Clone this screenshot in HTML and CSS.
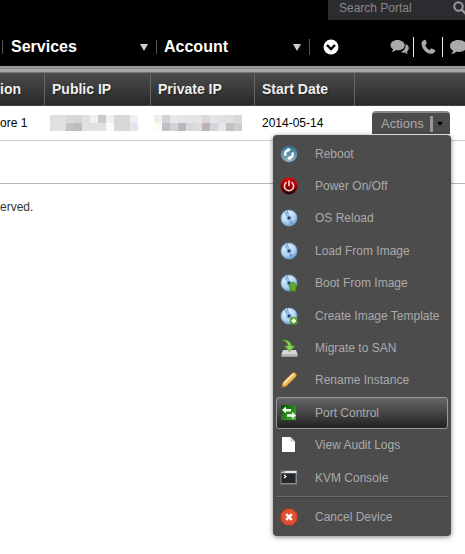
FILE: index.html
```html
<!DOCTYPE html>
<html lang="en">
<head>
<meta charset="utf-8">
<title>Portal - Device List</title>
<link rel="stylesheet" href="styles.css">
</head>
<body>
<svg class="defs" aria-hidden="true">
  <defs>
    <radialGradient id="disc-fill" cx=".4" cy=".3" r=".75"><stop offset="0" stop-color="#edf6ff"/><stop offset=".6" stop-color="#b5d5f5"/><stop offset="1" stop-color="#6799cb"/></radialGradient>
    <linearGradient id="red-fill" x2="0" y2="1"><stop offset="0" stop-color="#e00808"/><stop offset=".5" stop-color="#a00000"/><stop offset="1" stop-color="#180000"/></linearGradient>
    <linearGradient id="blue-fill" x2="0" y2="1"><stop offset="0" stop-color="#2b6f8e"/><stop offset="1" stop-color="#8fb0c2"/></linearGradient>
    <linearGradient id="green-fill" x2="1" y2="1"><stop offset="0" stop-color="#0b4d0b"/><stop offset="1" stop-color="#49b52e"/></linearGradient>
    <linearGradient id="pencil-fill" x2="1" y2="1"><stop offset="0" stop-color="#fff0b0"/><stop offset="1" stop-color="#e08a1c"/></linearGradient>
    <symbol id="disc" viewBox="0 0 18 18">
      <circle cx="9" cy="9" r="8" fill="url(#disc-fill)" stroke="#7da6d2" stroke-width=".8"/>
      <path d="M7 2l1.500 4M5 3l2 4M11 16l-1-4M13 15l-2-3" stroke="#6e9fda" stroke-width="1.400"/>
      <circle cx="9" cy="9" r="2.800" fill="#8db6e2"/>
      <circle cx="9" cy="9" r="1.400" fill="#263c58"/>
    </symbol>
  </defs>
</svg>
<header class="top">
  <form class="search" role="search">
    <input class="search-input" type="text" placeholder="Search Portal" aria-label="Search Portal">
    <button class="search-button" type="button" aria-label="Search"><svg width="14" height="14" viewBox="0 0 14 14"><circle cx="5.500" cy="5.500" r="4.200" fill="none" stroke="#999" stroke-width="2"/><path d="M8.500 8.500l4.500 4.500" stroke="#999" stroke-width="2.600"/></svg></button>
  </form>
  <nav class="nav">
    <a class="nav-item services" href="#">Services<span class="arrow"></span></a>
    <a class="nav-item account" href="#">Account<span class="arrow"></span></a>
    <button class="more" type="button" aria-label="More"><svg width="16" height="16" viewBox="0 0 16 16"><circle cx="8" cy="8" r="7.500" fill="#fff"/><path d="M4 6l4 4 4-4" fill="none" stroke="#000" stroke-width="2.400"/></svg></button>
    <div class="contact">
      <a class="contact-link" href="#" aria-label="Chat"><svg width="19" height="16" viewBox="0 0 19 16"><path d="M11 13c2 1 3 .7 4 .5 1 .9 2 1.300 3 1.500-.8-1-1-1.500-1-2.200C20 10 19 6 15.500 5c.6 4-1.500 7-4.500 8z" fill="#aaa"/><path d="M7.500 1C3.500 1 .5 3.300.5 6.200c0 1.700 1 3.200 2.500 4.100 0 1-.6 2-1.500 2.700 2-.2 3.300-1 4.200-1.800 5 .7 9-1.400 9-5C14.700 3.300 11.500 1 7.500 1z" fill="#aaa"/></svg></a>
      <a class="contact-link" href="#" aria-label="Phone"><svg width="17" height="16" viewBox="0 0 16 16"><path d="M4.300.8C2 1.500.8 3 1 5c.5 5 4.500 9 8.500 9.800 2.200.3 4.500-.8 5.300-2.800.2-.5 0-.8-.4-1l-3-1.400c-.5-.2-.9 0-1.200.3l-1 1.200C7 10.200 5.300 8 4.700 6l1.200-1c.4-.3.500-.7.3-1.200L5.200 1.200c-.2-.4-.5-.5-.9-.4z" fill="#aaa"/></svg></a>
      <a class="contact-link" href="#" aria-label="Message"><svg width="19" height="16" viewBox="0 0 19 16"><path d="M9.500 1C4.500 1 1 3.500 1 7c0 2 1.200 3.600 3 4.600 0 1.500-.8 2.700-2 3.400 2.500 0 4.300-1 5.500-2.200C13.500 13.500 18 11 18 7c0-3.500-3.500-6-8.500-6z" fill="#aaa"/></svg></a>
    </div>
  </nav>
</header>
<main>
  <table class="devices">
    <colgroup><col class="col-location"><col class="col-public"><col class="col-private"><col class="col-date"><col></colgroup>
    <thead>
      <tr><th class="cut">ion</th><th>Public IP</th><th>Private IP</th><th>Start Date</th><th></th></tr>
    </thead>
    <tbody>
      <tr>
        <td class="cut">ore 1</td>
        <td class="address"><svg width="88" height="16" viewBox="0 0 11 2" shape-rendering="crispEdges"><path fill="#e0e0e0" d="M0 0h11v2H0z"/><path fill="#e3dfdb" d="M1 0h1v1H1z"/><path fill="#d8d8de" d="M2 0h1v1H2z"/><path fill="#d8d3d5" d="M3 0h1v1H3z"/><path fill="#f0f0ec" d="M5 0h1v1H5z"/><path fill="#cacaca" d="M6 0h1v1H6z"/><path fill="#f0f0f5" d="M7 0h1v1H7z"/><path fill="#d8d8d8" d="M8 0h1v2H8z"/><path fill="#dad8d3" d="M9 0h1v2H9z"/><path fill="#eeeef5" d="M10 0h1v1h-1z"/><path fill="#c4c1c4" d="M2 1h1v1H2z"/><path fill="#c1bcbf" d="M3 1h1v1H3z"/><path fill="#dde0e6" d="M4 1h1v1H4z"/><path fill="#fafaf8" d="M7 1h1v1H7z"/><path fill="#e2e4ef" d="M10 1h1v1h-1z"/></svg></td>
        <td class="address private"><svg width="88" height="16" viewBox="0 0 11 2" shape-rendering="crispEdges"><path fill="#e2e4e6" d="M0 0h11v2H0z"/><path fill="#f2eee9" d="M0 0h1v1H0z"/><path fill="#d2d2d5" d="M1 0h1v1H1z"/><path fill="#e8e7eb" d="M2 0h1v1H2z"/><path fill="#ddd7d7" d="M6 0h1v1H6z"/><path fill="#e0e0dd" d="M8 0h2v1H8z"/><path fill="#d8dadc" d="M10 0h1v1h-1z"/><path fill="#fefcf2" d="M0 1h1v1H0z"/><path fill="#c1bec5" d="M1 1h1v1H1z"/><path fill="#d4d2d7" d="M2 1h1v1H2z"/><path fill="#b5b9bb" d="M3 1h1v1H3z"/><path fill="#d6d7da" d="M4 1h1v1H4z"/><path fill="#dfdbd8" d="M5 1h1v1H5z"/><path fill="#bbb3b7" d="M6 1h1v1H6z"/><path fill="#d0d5dc" d="M7 1h1v1H7z"/><path fill="#e5e5e8" d="M8 1h1v1H8z"/><path fill="#c4c1c1" d="M9 1h1v1H9z"/><path fill="#cccecf" d="M10 1h1v1h-1z"/></svg></td>
        <td class="date">2014-05-14</td>
        <td class="action-cell">
          <div class="actions">
            <button class="actions-button" type="button" aria-haspopup="true" aria-expanded="true">Actions<span class="split"></span><span class="caret"></span></button>
            <div class="menu">
              <div class="menu-group">
                <button class="item" type="button"><svg class="icon" viewBox="0 0 18 18"><circle cx="9" cy="9" r="8.300" fill="url(#blue-fill)"/><path d="M8.500 5C5.500 5.500 4.500 8 5.600 10.600M9.500 13c3-.5 4-3 2.900-5.600" fill="none" stroke="#fff" stroke-width="2.400"/><path d="M7.500 2.500v5L11 4.500zM10.500 15.500v-5L7 13.500z" fill="#fff"/></svg>Reboot</button>
                <button class="item" type="button"><svg class="icon" viewBox="0 0 18 18"><circle cx="9" cy="9" r="8.500" fill="url(#red-fill)"/><path d="M6 5.600a4.600 4.600 0 1 0 6 0M9 4v4.500" fill="none" stroke="#f3cfcf" stroke-width="1.700" stroke-linecap="round"/></svg>Power On/Off</button>
                <button class="item" type="button"><svg class="icon" viewBox="0 0 18 18"><use href="#disc"/></svg>OS Reload</button>
              </div>
              <div class="menu-group">
                <button class="item" type="button"><svg class="icon" viewBox="0 0 18 18"><use href="#disc"/></svg>Load From Image</button>
                <button class="item" type="button"><svg class="icon" viewBox="0 0 18 18"><use href="#disc"/><path d="M13 7.500l4.500 4.500H16v5h-6v-5H8.500z" fill="#5fa832" stroke="#41831d" stroke-width=".8"/></svg>Boot From Image</button>
              </div>
              <div class="menu-group">
                <button class="item" type="button"><svg class="icon" viewBox="0 0 18 18"><use href="#disc"/><rect x="10" y="10" width="7.500" height="7.500" rx="2" fill="#5b9c36"/><path d="M13.750 11.500v4.500M11.500 13.750H16" stroke="#f4ffe8" stroke-width="2"/></svg>Create Image Template</button>
                <button class="item" type="button"><svg class="icon" viewBox="0 0 18 18"><path d="M3 11h13l1.500 4v2.500h-16V15z" fill="#d5d8d7"/><path d="M2 15h15v2.300H2z" fill="#b5b8b7"/><path d="M2 1c6-.5 9 2 9.500 6H15l-5.500 5.500L4.500 7H8C7.700 4 6 2 2 1z" fill="#8fd05b" stroke="#4e8f31" stroke-width=".8"/></svg>Migrate to SAN</button>
                <button class="item" type="button"><svg class="icon" viewBox="0 0 18 18"><path d="M1.500 16.500l1-4.500L12.500 2c2-1.500 5 1 3.500 3.500L6 15.500z" fill="url(#pencil-fill)" stroke="#b86b16" stroke-width=".8"/><path d="M4 12l9-9" stroke="#fff1b3" stroke-width="1.500"/><path d="M1.500 16.500l.4-2 1.600 1.600z" fill="#5a3815"/></svg>Rename Instance</button>
              </div>
              <div class="menu-group">
                <button class="item current" type="button"><svg class="icon" viewBox="0 0 18 18"><path d="M1 1h15v15H1z" fill="url(#green-fill)"/><path d="M2 6l4-3.500V5h5v2.500H6v2zM16 11.500L12 8v2.200H7v2.600h5V15z" fill="#f0fff0"/></svg>Port Control</button>
                <button class="item" type="button"><svg class="icon" viewBox="0 0 18 18"><path d="M2 1h8.500L15 5.500V16H2z" fill="#fff"/><path d="M10.500 1v4.500H15z" fill="#ccc"/></svg>View Audit Logs</button>
              </div>
              <div class="menu-group">
                <button class="item" type="button"><svg class="icon" viewBox="0 0 18 18"><path d="M.5 1.500h16.500v14H.5z" fill="#83898f"/><path d="M1 2h15.500v2H1z" fill="#e3e7ea"/><path d="M1 2h2v1.500H1z" fill="#d53a2f"/><path d="M3.500 2h1.500v1.500H3.500z" fill="#4c9c39"/><path d="M1.500 4.500h14v9.500h-14z" fill="#22272b"/><path d="M4 6l2 1.500L4 9" fill="none" stroke="#fff" stroke-width="1.200"/></svg>KVM Console</button>
              </div>
              <hr class="rule">
              <div class="menu-group">
                <button class="item" type="button"><svg class="icon" viewBox="0 0 18 18"><path d="M5.600.8h6.800l4.800 4.800v6.800l-4.800 4.800H5.600L.8 12.400V5.600z" fill="#de5131" stroke="#a83018" stroke-width=".8"/><path d="M6.200 6.200l5.600 5.600M11.800 6.200l-5.600 5.600" stroke="#fff" stroke-width="2.500"/></svg>Cancel Device</button>
              </div>
            </div>
          </div>
        </td>
      </tr>
    </tbody>
  </table>
</main>
<footer class="footer">erved.</footer>
</body>
</html>
```
FILE: styles.css
```css
* { box-sizing: border-box; }
body { min-height: 100vh; margin: 0; background: #fff; color: #333; font: 12px/16px "Liberation Sans", Arial, sans-serif; }
a { color: inherit; text-decoration: none; }
button { margin: 0; padding: 0; border: 0; background: none; font: inherit; color: inherit; }
svg { display: block; flex: none; }
.defs { position: absolute; width: 0; height: 0; }

.top { background: #000; color: #fff; }
.top::after { content: ""; display: block; height: 7px; background: linear-gradient(#9c9c9c 2px, #868686 2px, #868686 3px, #a8a8a8 3px, #a8a8a8 6px, #777 6px); }
.search { display: flex; align-items: center; width: 137px; height: 20px; margin-left: auto; padding: 0 0 4px 11px; background: #2b2c2f; overflow: hidden; }
.search-input { flex: 1; min-width: 0; padding: 0; border: 0; outline: 0; background: none; color: #999; font: 12px/16px "Liberation Sans", Arial, sans-serif; }
.search-input::placeholder { color: #888; opacity: 1; }
.search-button { margin-right: -2px; }

.nav { display: flex; align-items: center; height: 46px; padding: 8px 0 0 2px; white-space: nowrap; overflow: hidden; }
.nav-item { display: flex; flex: none; align-items: center; justify-content: space-between; height: 14px; padding: 0 8px; border-left: 1px solid #555; font-size: 16px; font-weight: bold; }
.services { width: 154px; }
.account { width: 153px; padding: 0 8px 0 7px; }
.arrow { border: 4px solid transparent; border-top: 7px solid #ccc; border-bottom: 0; }
.more { flex: none; height: 16px; padding-left: 13px; border-left: 1px solid #555; }
.contact { display: flex; flex: none; margin-left: auto; margin-right: -8px; }
.contact-link { padding: 2px 5px 2px 6px; border-left: 1px solid #eee; }
.contact-link:first-child { padding-right: 4px; border: 0; }

.devices { width: 100%; border-collapse: separate; border-spacing: 0; table-layout: fixed; }
.col-location { width: 44px; }
.col-public { width: 106px; }
.col-private { width: 104px; }
.col-date { width: 100px; }
.devices th { height: 33px; padding: 0 0 0 7px; border-left: 1px solid #666; border-bottom: 1px solid #444; background: linear-gradient(#4b4b4b, #292929); color: #eee; font-size: 14px; text-align: left; text-shadow: 1px 1px 1px #222; white-space: nowrap; }
.devices td { height: 35px; padding: 0 0 0 8px; border-bottom: 1px solid #ccc; color: #000; }
.devices .cut { padding-left: 0; border-left: 0; white-space: nowrap; }
.devices .address { padding-left: 6px; }
.devices .private { padding-left: 4px; }
.devices .action-cell { padding: 5px 15px 0 0; vertical-align: top; }

.actions { position: relative; width: 78px; margin-left: auto; }
.actions-button { display: flex; align-items: center; width: 100%; height: 23px; padding-left: 9px; border-top: 2px solid #888; border-radius: 4px 4px 0 0; background: #4c4c4c; color: #aaa; font-size: 13px; }
.split { width: 3px; height: 16px; margin-left: 6px; background: #9a9691; }
.caret { margin-left: 4px; border: 3px solid transparent; border-top: 4px solid #000; border-bottom: 0; }

.menu { position: absolute; top: 24px; right: -1px; display: flex; flex-direction: column; gap: 1px; width: 178px; padding: 3px; border-radius: 4px; background: #4c4c4c; box-shadow: 0 1px 5px rgba(0, 0, 0, .5); }
.item { display: flex; align-items: center; width: 100%; height: 32px; padding: 0 3px; border: 1px solid transparent; border-radius: 3px; color: #aaa; text-align: left; white-space: nowrap; }
.item .icon { width: 18px; height: 18px; margin-right: 17px; }
.item.current { border-color: #999; background: linear-gradient(#666, #222); }
.rule { width: 100%; height: 2px; margin: 1px 0 2px; border: 0; border-top: 1px solid #6c6c6c; border-bottom: 1px solid #404040; }

.footer { margin-top: 42px; padding-top: 15px; border-top: 1px solid #b5b5b5; }
```
